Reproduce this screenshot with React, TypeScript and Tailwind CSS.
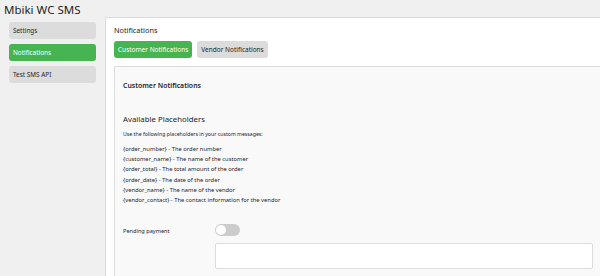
const placeholders = [
  ['{order_number}', 'The order number'],
  ['{customer_name}', 'The name of the customer'],
  ['{order_total}', 'The total amount of the order'],
  ['{order_date}', 'The date of the order'],
  ['{vendor_name}', 'The name of the vendor'],
  ['{vendor_contact}', 'The contact information for the vendor'],
];

const menu = ['Settings', 'Notifications', 'Test SMS API'];

export default function App() {
  return (
    <div
      className="h-[276px] w-[600px] overflow-hidden bg-[#f0f0f0] text-[#1d2327]"
      style={{ fontFamily: '"Segoe UI", "Noto Sans", sans-serif' }}
    >
      <h1 className="pl-[4px] pt-[2px] text-[11.5px] leading-[15px] text-[#1d2327]">Mbiki WC SMS</h1>
      <div className="flex">
        <nav className="flex w-[105px] shrink-0 flex-col gap-[5px] px-[9px] pt-[5px]">
          {menu.map((item) => (
            <div
              key={item}
              className={
                item === 'Notifications'
                  ? 'flex h-[17px] items-center rounded-[3px] bg-[#46b450] px-[4px] text-[6.4px] text-white'
                  : 'flex h-[17px] items-center rounded-[3px] bg-[#dcdcdc] px-[4px] text-[6.4px] text-[#1d2327]'
              }
            >
              {item}
            </div>
          ))}
        </nav>
        <main className="h-[276px] flex-1 border-l border-t border-[#dcdcdc] bg-white pl-[8px] pt-[6px]">
          <h2 className="text-[7.3px] leading-[12px]">Notifications</h2>
          <div className="mt-[5px] flex gap-[5px]">
            <button className="flex h-[17px] items-center rounded-[3px] bg-[#46b450] px-[4px] text-[6.5px] text-white">
              Customer Notifications
            </button>
            <button className="flex h-[17px] items-center rounded-[3px] bg-[#dcdcdc] px-[4px] text-[6.5px] text-[#1d2327]">
              Vendor Notifications
            </button>
          </div>
          <section className="mt-[8px] h-[220px] border-l border-t border-[#dcdcdc] bg-[#f9f9f9] pl-[8px] pt-[13px]">
            <h3 className="text-[6.9px] font-semibold leading-[12px]">Customer Notifications</h3>
            <h4 className="mt-[19px] text-[7.8px] leading-[16px]">Available Placeholders</h4>
            <p className="mt-[2px] text-[5.2px] leading-[10px]">Use the following placeholders in your custom messages:</p>
            <ul className="mt-[5px]">
              {placeholders.map(([key, text]) => (
                <li key={key} className="text-[5.8px] leading-[10.2px]">
                  {key} - {text}
                </li>
              ))}
            </ul>
            <div className="mt-[19px] flex">
              <label className="w-[92px] shrink-0 pt-[2px] text-[5.6px] leading-[10px]">Pending payment</label>
              <div className="flex flex-1 flex-col gap-[7px] pr-[7px]">
                <div className="relative h-[12px] w-[25px] rounded-full bg-[#cccccc]">
                  <span className="absolute left-[1px] top-[1px] h-[10px] w-[10px] rounded-full bg-white" />
                </div>
                <textarea className="h-[26px] w-full resize-none rounded-[2px] border border-[#dcdcdc] bg-white" />
              </div>
            </div>
          </section>
        </main>
      </div>
    </div>
  );
}
